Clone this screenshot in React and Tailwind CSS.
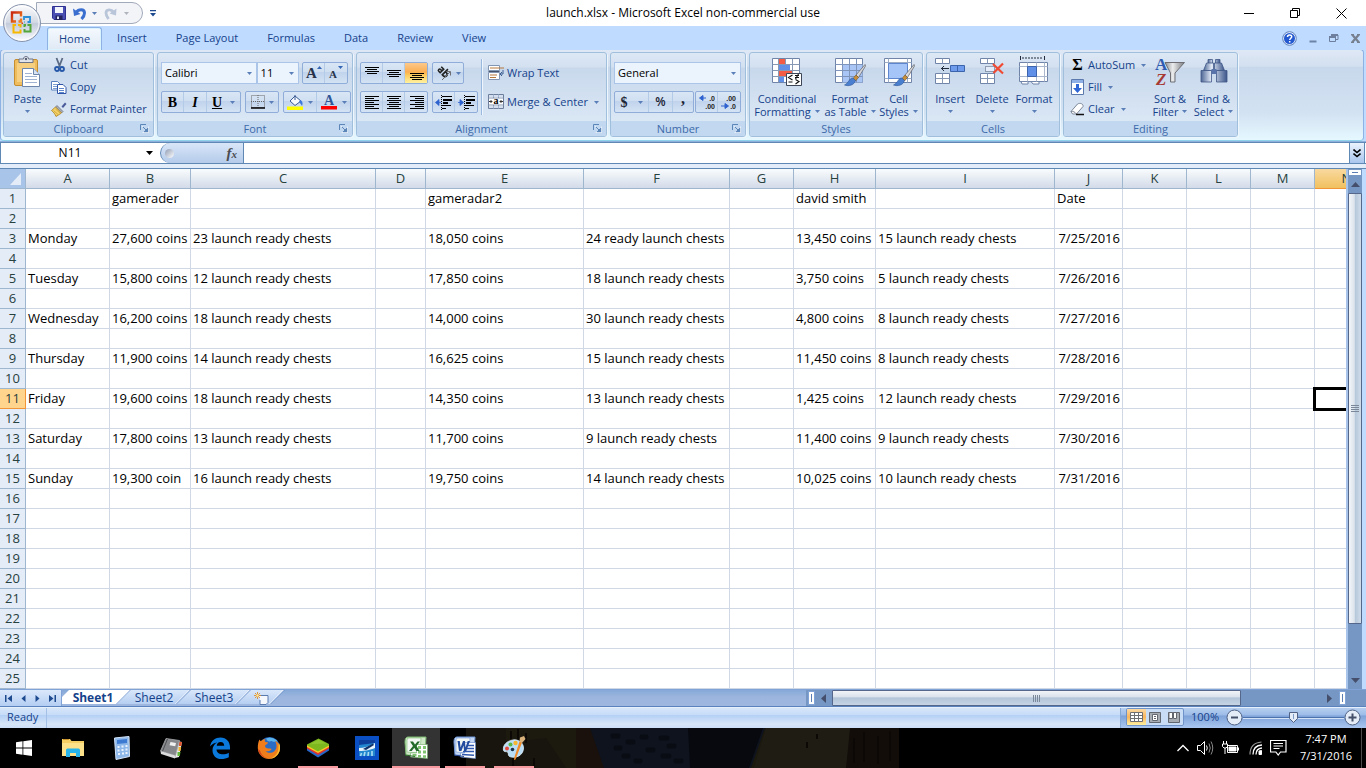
import { useState } from 'react'

const COLUMNS = [
  ['A', 84],
  ['B', 81],
  ['C', 185],
  ['D', 50],
  ['E', 158],
  ['F', 146],
  ['G', 64],
  ['H', 82],
  ['I', 179],
  ['J', 68],
  ['K', 64],
  ['L', 64],
  ['M', 64],
  ['N', 64],
]

const CELLS = {
  1: { B: 'gamerader', E: 'gameradar2', H: 'david smith', J: 'Date' },
  3: { A: 'Monday', B: '27,600 coins', C: '23 launch ready chests', E: '18,050 coins', F: '24 ready launch chests', H: '13,450 coins', I: '15 launch ready chests', J: '7/25/2016' },
  5: { A: 'Tuesday', B: '15,800 coins', C: '12 launch ready chests', E: '17,850 coins', F: '18 launch ready chests', H: '3,750 coins', I: '5 launch ready chests', J: '7/26/2016' },
  7: { A: 'Wednesday', B: '16,200 coins', C: '18 launch ready chests', E: '14,000 coins', F: '30 launch ready chests', H: '4,800 coins', I: '8 launch ready chests', J: '7/27/2016' },
  9: { A: 'Thursday', B: '11,900 coins', C: '14 launch ready chests', E: '16,625 coins', F: '15 launch ready chests', H: '11,450 coins', I: '8 launch ready chests', J: '7/28/2016' },
  11: { A: 'Friday', B: '19,600 coins', C: '18 launch ready chests', E: '14,350 coins', F: '13 launch ready chests', H: '1,425 coins', I: '12 launch ready chests', J: '7/29/2016' },
  13: { A: 'Saturday', B: '17,800 coins', C: '13 launch ready chests', E: '11,700 coins', F: '9 launch ready chests', H: '11,400 coins', I: '9 launch ready chests', J: '7/30/2016' },
  15: { A: 'Sunday', B: '19,300 coin', C: '16 launch ready chests', E: '19,750 coins', F: '14 launch ready chests', H: '10,025 coins', I: '10 launch ready chests', J: '7/31/2016' },
}

const ROWS = Array.from({ length: 25 }, (_, i) => i + 1)
const TABS = ['Home', 'Insert', 'Page Layout', 'Formulas', 'Data', 'Review', 'View']

/* ---------- small shared pieces ---------- */

function Caret({ className = 'text-[#5a7fb8]' }) {
  return (
    <svg width="5" height="3" viewBox="0 0 5 3" className={`shrink-0 ${className}`} aria-hidden="true">
      <path d="M0 0h5L2.5 3z" fill="currentColor" />
    </svg>
  )
}

function Group({ title, width, launcher, children }) {
  return (
    <section
      className={`flex h-[85px] shrink-0 flex-col overflow-hidden rounded-[3px] border border-[#9fbfdc] bg-[linear-gradient(#dde8f5,#d3e0f0_17%,#c8d8ec_18%,#dfebf7)] shadow-[1px_1px_0_#eef6fd] ${width}`}
    >
      <div className="flex h-[68px] items-start">{children}</div>
      <div className="relative flex h-[15px] items-center justify-center bg-[#c1d8f0] text-[11px] leading-[15px] text-[#3e6aaa]">
        {title}
        {launcher && (
          <button aria-label={`${title} options`} className="absolute right-1 top-[3px]">
            <svg width="9" height="9" viewBox="0 0 9 9">
              <path d="M.5 6V.5H6" fill="none" stroke="#5d86b8" />
              <path d="M3 3l4 4M8 4v4H4z" fill="#5d86b8" stroke="#5d86b8" />
              <path d="M2 2.500h1M2.500 8.500h6v-6" stroke="#fff" strokeWidth=".6" fill="none" />
            </svg>
          </button>
        )}
      </div>
    </section>
  )
}

// Row of joined buttons with a shared outline
function Strip({ children, className = '' }) {
  return (
    <div
      className={`flex h-[22px] divide-x divide-[#b4cbe8] rounded-[2px] border border-[#8fadd8] bg-[linear-gradient(#d9e6f5,#cfdff1_45%,#c0d3ec_46%,#d4e3f4)] ${className}`}
    >
      {children}
    </div>
  )
}

function StripButton({ label, className = 'w-[22px]', children }) {
  return (
    <button aria-label={label} className={`flex items-center justify-center gap-1 ${className}`}>
      {children}
    </button>
  )
}

function SmallButton({ icon, children, caret }) {
  return (
    <button className="flex h-[22px] items-center gap-[3px] whitespace-nowrap text-[11px] text-[#15428b]">
      {icon}
      {children}
      {caret && <span className="pl-[3px]"><Caret /></span>}
    </button>
  )
}

function BigButton({ icon, top, bottom, width }) {
  return (
    <button className={`flex flex-col items-center pt-[3px] text-[11px] leading-[13px] text-[#15428b] ${width}`}>
      {icon}
      <span className="mt-1 whitespace-nowrap">{top}</span>
      <span className="flex h-[13px] items-center gap-1 whitespace-nowrap">
        {bottom}
        <Caret />
      </span>
    </button>
  )
}

function Picker({ label, value, width }) {
  return (
    <div className={`relative h-[22px] ${width}`}>
      <select
        aria-label={label}
        className="block h-[22px] w-full appearance-none border border-[#abc5e8] bg-[#ebf3fc] pl-[3px] text-[11px] leading-4 text-black outline-none"
      >
        <option>{value}</option>
      </select>
      <span className="pointer-events-none absolute inset-y-0 right-[5px] flex items-center">
        <Caret />
      </span>
    </div>
  )
}

/* ---------- title bar ---------- */

function OfficeOrb() {
  return (
    <button aria-label="Office Button" className="absolute left-[2px] top-[3px] z-20">
      <svg width="40" height="40" viewBox="0 0 40 40">
        <defs>
          <linearGradient id="orb" x1="0" y1="0" x2="0" y2="1">
            <stop offset="0" stopColor="#fdfdfe" />
            <stop offset=".48" stopColor="#d3d9e4" />
            <stop offset=".52" stopColor="#c3cbdb" />
            <stop offset="1" stopColor="#fbfcff" />
          </linearGradient>
          <linearGradient id="orbRed" x1="0" y1="0" x2="1" y2="1">
            <stop offset="0" stopColor="#c8260e" />
            <stop offset="1" stopColor="#f58220" />
          </linearGradient>
        </defs>
        <circle cx="20" cy="20" r="18.5" fill="url(#orb)" stroke="#8794ad" />
        <circle cx="20" cy="20" r="17" fill="none" stroke="#fff" strokeOpacity=".8" />
        <path d="M19 13.500V9.500h-9v9h4M19 15.500v3h-2.500" fill="none" stroke="url(#orbRed)" strokeWidth="2.400" />
        <path d="M22 17V14h6v5h-2.500M22.500 19H22" fill="none" stroke="#2b8fd8" strokeWidth="1.800" />
        <path d="M14 22h-2.500v7.500h7v-3M18.500 24.500V22H16" fill="none" stroke="#f6b800" strokeWidth="2" />
        <path d="M25.500 22H28.500v6.500h-6v-2.500M22.500 24v-2h1.500" fill="none" stroke="#55a63a" strokeWidth="2" />
        <path d="M19.500 19.500h1.500v1.500h-1.500z" fill="#d8431a" />
      </svg>
    </button>
  )
}

function TitleBar() {
  return (
    <header className="grid h-[26px] grid-cols-[1fr_auto_1fr] items-center bg-white">
      <div className="flex items-center">
        <div className="ml-9 flex h-[22px] w-[107px] items-center gap-[7px] rounded-r-full border border-[#a1aaba] bg-[#f3f4f8] pl-[15px]">
          <button aria-label="Save">
            <svg width="14" height="14" viewBox="0 0 14 14">
              <path d="M.5.5h13v13H2L.5 12z" fill="#4a4fb4" stroke="#2e3192" />
              <path d="M3 1h8v6H3z" fill="#f2f4fb" />
              <path d="M3.500 9.500h7V14h-7z" fill="#23245e" />
              <path d="M5 10.500h2V13H5z" fill="#dfe3f5" />
            </svg>
          </button>
          <button aria-label="Undo" className="flex items-center gap-[5px]">
            <svg width="14" height="13" viewBox="0 0 14 13">
              <path d="M3 5.500C5.500 2 11.500 1.500 11.500 6c0 2.500-1.500 4.500-3 6" fill="none" stroke="#3a6fd0" strokeWidth="3" />
              <path d="M0 1.500l1 7.500 6.500-2z" fill="#3a6fd0" />
            </svg>
            <Caret />
          </button>
          <button aria-label="Redo" className="flex items-center gap-[7px]">
            <svg width="13" height="13" viewBox="0 0 13 13">
              <path d="M9.500 5C7.500 2 2 2 2 6c0 2.500 1 4 2.500 6" fill="none" stroke="#b9c5d9" strokeWidth="2.800" />
              <path d="M12.500 1.500L12 8.500 5.500 6.500z" fill="#b9c5d9" />
            </svg>
            <Caret className="text-[#b0b4bd]" />
          </button>
        </div>
        <button aria-label="Customize Quick Access Toolbar" className="ml-[7px]">
          <svg width="6" height="7" viewBox="0 0 6 7" fill="#1d4a8f">
            <path d="M0 0h6v1.200H0zM0 3h6L3 6.500z" />
          </svg>
        </button>
      </div>
      <h1 className="text-[12px] text-black">launch.xlsx - Microsoft Excel non-commercial use</h1>
      <div className="flex justify-end pr-0.5">
        <button aria-label="Minimize" className="flex w-[46px] items-center justify-center">
          <svg width="10" height="11" viewBox="0 0 10 11"><path d="M0 5.500h10" stroke="#000" /></svg>
        </button>
        <button aria-label="Restore" className="flex w-[46px] items-center justify-center">
          <svg width="10" height="10" viewBox="0 0 10 10">
            <path d="M.5 2.500h7v7h-7zM2.500 2.500v-2h7v7h-2" fill="none" stroke="#000" />
          </svg>
        </button>
        <button aria-label="Close" className="flex w-[46px] items-center justify-center">
          <svg width="11" height="11" viewBox="0 0 11 11"><path d="M.5.5l10 10M10.500.5l-10 10" stroke="#000" /></svg>
        </button>
      </div>
    </header>
  )
}

function TabStrip() {
  return (
    <nav className="relative z-10 flex h-6 items-end justify-between bg-[#bfdbff] pl-[47px]">
      <div className="flex gap-px text-[11px] text-[#15428b]">
        {TABS.map((tab) => (
          <button
            key={tab}
            className={
              tab === 'Home'
                ? 'h-[23px] rounded-t-[3px] border border-b-0 border-[#8db2e3] bg-[linear-gradient(#f5f9fe,#dfe9f5)] px-[11px] shadow-[inset_0_0_0_1px_#d9f3ff]'
                : 'h-[23px] px-3.5'
            }
          >
            {tab}
          </button>
        ))}
      </div>
      <div className="flex h-6 items-center gap-3 pr-1.5">
        <button aria-label="Help">
          <svg width="15" height="15" viewBox="0 0 15 15">
            <circle cx="7.500" cy="7.500" r="6.800" fill="#e9f1fd" stroke="#5f80bb" />
            <circle cx="7.500" cy="7.500" r="5.500" fill="#2459cf" />
            <path d="M5.500 6c0-2.600 4.200-2.600 4.200-.2 0 1.400-2 1.500-2 3.200M7.700 10v1.500" fill="none" stroke="#fff" strokeWidth="1.500" />
          </svg>
        </button>
        <button aria-label="Minimize workbook">
          <svg width="8" height="9" viewBox="0 0 8 9"><path d="M.5 6.500h7v2h-7z" fill="#6d84a6" /></svg>
        </button>
        <button aria-label="Restore workbook">
          <svg width="10" height="9" viewBox="0 0 10 9">
            <path d="M.5 3.500h6v4h-6zM2.500 3V1h6.500v4.500H7" fill="none" stroke="#6d7f9c" />
            <path d="M0 3h7M2 1h7" stroke="#6d7f9c" strokeWidth="2" />
          </svg>
        </button>
        <button aria-label="Close workbook">
          <svg width="9" height="9" viewBox="0 0 9 9">
            <path d="M1 .5l7 8M8 .5l-7 8" stroke="#77808f" strokeWidth="2.200" />
            <path d="M0 .5h3M6 .5h3M0 8.500h3M6 8.500h3" stroke="#77808f" />
          </svg>
        </button>
      </div>
    </nav>
  )
}

/* ---------- ribbon icons ---------- */

const PasteIcon = (
  <svg width="30" height="32" viewBox="0 0 30 32">
    <rect x="1.500" y="3.500" width="23" height="26" rx="1.500" fill="#f0bd5e" stroke="#c68d31" />
    <path d="M4 7h18v19H4z" fill="#f7cf80" />
    <path d="M6 6.500V3h4.500c0-3.500 5-3.500 5 0H20v3.500z" fill="#e2e4ea" stroke="#6c7488" />
    <circle cx="13" cy="3" r="1.200" fill="#555e74" />
    <path d="M9.500 12.500h11l6 6v12h-17z" fill="#fff" stroke="#6d85ab" />
    <path d="M20.500 12.500v6h6" fill="#d7e3f3" stroke="#6d85ab" />
    <path d="M12 17.500h7M12 20.500h12M12 23.500h12M12 26.500h12" stroke="#9fb2d2" />
  </svg>
)

const CutIcon = (
  <svg width="16" height="16" viewBox="0 0 16 16" fill="none">
    <path d="M5.500 1l3.500 9M11.500 1L8 10" stroke="#5b6b84" strokeWidth="1.800" />
    <circle cx="6" cy="12" r="2" stroke="#2858a8" strokeWidth="1.800" />
    <circle cx="11" cy="12" r="2" stroke="#2858a8" strokeWidth="1.800" />
  </svg>
)

const CopyIcon = (
  <svg width="16" height="16" viewBox="0 0 16 16" fill="#fff" stroke="#5a80bf">
    <path d="M.5 2.500h6l2.500 2.500v6h-8.500z" />
    <path d="M2 5.500h4M2 7.500h4M2 9.500h4" stroke="#7c9dd2" />
    <path d="M6.500 5.500h5.500l3 3v6h-8.500z" stroke="#2d54a6" />
    <path d="M8 9.500h5M8 11.500h5M8 13.500h5" stroke="#5e86cc" />
  </svg>
)

const PainterIcon = (
  <svg width="16" height="16" viewBox="0 0 16 16">
    <path d="M10.500 5.500L14 1.500l1.500 1.500L12 7z" fill="#4b5a9a" />
    <path d="M6 4.500l6 6-1.500 1.500-6-6z" fill="#a8aeb8" stroke="#646b7a" strokeWidth=".7" />
    <path d="M4.500 6L.5 9.500c2 1.500 3.500 3.500 4.500 6L10.500 12z" fill="#f3d36a" stroke="#ac7f1c" strokeWidth=".8" />
    <path d="M2.500 9.500L7 13.500M4.500 8l4.500 4" stroke="#c99a2b" strokeWidth=".7" />
  </svg>
)

function LinesIcon({ rows, top = 1 }) {
  return (
    <svg width="15" height="15" viewBox="0 0 15 15">
      {rows.map(([x, w], i) => (
        <rect key={i} x={x} y={top + i * 2} width={w} height="1" fill="#000" />
      ))}
    </svg>
  )
}

function IndentIcon({ flip }) {
  return (
    <svg width="17" height="15" viewBox="0 0 17 15">
      <path d="M7 1.500h10M8 4.500h8M8 7.500h5M7 10.500h9M7 13.500h4" stroke="#000" strokeWidth="1" />
      <path d="M8 4h9v2H8zM8 7h5v2H8z" fill="#000" />
      <path d="M6.500 0v15" stroke="#000" strokeDasharray="1 1" />
      <path d={flip ? 'M0 7.500h3M2 4.500L5.500 7.500 2 10.500z' : 'M2 7.500h4M4 4.500L.5 7.500 4 10.500z'} stroke="#2f63cf" fill="#2f63cf" strokeWidth=".8" />
    </svg>
  )
}

const OrientIcon = (
  <svg width="16" height="16" viewBox="0 0 16 16" fill="none">
    <g transform="rotate(45 7 7)" stroke="#222" strokeWidth="1.600">
      <path d="M2 4.500h3.500v5H3.500a1.300 1.300 0 010-2.600h2" />
      <path d="M8.500 1.500v8h1.500a2.200 2.200 0 000-4.400H8.500" />
    </g>
    <path d="M6 15l8-8M14.500 6.500v4M14.500 6.500h-4" stroke="#6d6d72" />
  </svg>
)

const WrapIcon = (
  <svg width="16" height="16" viewBox="0 0 16 16">
    <path d="M.5.500h11v5H.5zM.5 7.500h11v7H.5z" fill="#fff" stroke="#8296b4" />
    <path d="M2 3h14M2 10h7M2 12.500h6" stroke="#b5793d" strokeWidth="1.200" />
    <path d="M15 5v4h-2M14 7l-2 2 2 2" fill="none" stroke="#3d5c92" />
    <path d="M.5 6.500h11" stroke="#44526b" />
  </svg>
)

const MergeIcon = (
  <svg width="16" height="16" viewBox="0 0 16 16">
    <path d="M.5.500h15v14H.5z" fill="#fff" stroke="#6d7f9c" />
    <path d="M.5 4h15M.5 11h15M5.500 0v4M10.500 0v4M5.500 11v4M10.500 11v4" stroke="#8496b2" />
    <path d="M1 12h14v2H1zM1 1h14v2H1z" fill="#b8cbe6" fillOpacity=".6" />
    <text x="8" y="10" textAnchor="middle" fontSize="10" fontWeight="700" fontFamily="Liberation Serif, serif">a</text>
    <path d="M1 7.500h3M2.500 6L4 7.500 2.500 9M15 7.500h-3M13.500 6L12 7.500 13.500 9" stroke="#222" fill="none" strokeWidth=".9" />
  </svg>
)

function GridIcon({ children }) {
  return (
    <svg width="32" height="32" viewBox="0 0 32 32">
      <path d="M1.500 2.500h27v24h-27z" fill="#fff" stroke="#6f84a8" />
      {children}
    </svg>
  )
}

function Brush() {
  return (
    <g>
      <path d="M31 8.500L22 19l2.500 2.500L31.500 10z" fill="#d5d7da" stroke="#5c5f66" strokeWidth=".7" />
      <path d="M22 19l-3 3.500 2.500 2.500 3-3.500z" fill="#c9903c" stroke="#7d5619" strokeWidth=".6" />
      <path d="M19 22c-4 0-4 5-8.500 7 4 1.500 9.500.5 11-4.500z" fill="#4a7fd0" stroke="#2d5597" strokeWidth=".6" />
    </g>
  )
}

const ConditionalIcon = (
  <GridIcon>
    <path d="M8 3h6v6H8zM8 15h13v5H8z" fill="#f25c45" />
    <path d="M8 9h11v6H8zM8 20h5v6H8z" fill="#5f8fe6" />
    <path d="M1.500 8.500h27M1.500 14.500h27M1.500 20.500h27M7.500 2.500v24M14.500 2.500v6M21.500 2.500v24" stroke="#8798b5" />
    <path d="M15.500 17.500h15v12h-15z" fill="#fff" stroke="#3d4656" />
    <path d="M21.500 19l-4 2.500 4 2.500M17.500 26h4M24 19.500h4M24 21.500h4M27.500 18l-3 5M24.500 23.500l3.500 2-3.500 2.500" fill="none" stroke="#111" strokeWidth="1.100" />
  </GridIcon>
)

const TableIcon = (
  <GridIcon>
    <path d="M8 9h20.500v17.500H8z" fill="#a8c5f6" />
    <path d="M1.500 8.500h27M1.500 14.500h27M1.500 20.500h27M8.500 2.500v24M15.500 2.500v24M22.500 2.500v24" stroke="#7f94ba" />
    <Brush />
  </GridIcon>
)

const CellStyleIcon = (
  <GridIcon>
    <path d="M1.500 6.500h27M1.500 22.500h27M5.500 2.500v24M24.500 2.500v24" stroke="#9dacc5" />
    <path d="M5.500 7.500h19v15h-19z" fill="#a5c4f8" stroke="#5d86cf" />
    <Brush />
  </GridIcon>
)

const InsertIcon = (
  <svg width="32" height="32" viewBox="0 0 32 32">
    <path d="M1.500 2.500h14v5h-14zM1.500 17.500h14v10h-14z" fill="#fff" stroke="#6f84a8" />
    <path d="M8.500 2.500v5M8.500 17.500v10M1.500 22.500h14" stroke="#8798b5" />
    <path d="M16.500 9.500h14v6h-14z" fill="#6f9bec" stroke="#3c64ad" />
    <path d="M23.500 9.500v6" stroke="#3c64ad" />
    <path d="M15 12.500H7M10 10l-2.500 2.500L10 15" stroke="#222b3b" fill="none" />
  </svg>
)

const DeleteIcon = (
  <svg width="32" height="32" viewBox="0 0 32 32">
    <path d="M4.500 2.500h14v5h-14zM4.500 17.500h14v10h-14z" fill="#fff" stroke="#6f84a8" />
    <path d="M11.500 2.500v5M11.500 17.500v10M4.500 22.500h14" stroke="#8798b5" />
    <path d="M9.500 10.500h9v5h-9z" fill="#e4edf9" stroke="#44536e" strokeDasharray="1 1" />
    <path d="M17 8l10 9.500M27 7.500L17.500 17" stroke="#f04a32" strokeWidth="2.200" />
  </svg>
)

const FormatIcon = (
  <svg width="32" height="32" viewBox="0 0 32 32">
    <path d="M2.500 0v4M26.500 0v4" stroke="#222b3b" />
    <path d="M4 2h21" stroke="#222b3b" strokeDasharray="2 1" />
    <path d="M1.500 6.500h28v19h-28z" fill="#fff" stroke="#6f84a8" />
    <path d="M3 25.500h7v2.500H4zM13 25.500h8v2.500h-6z" fill="#fff" stroke="#6f84a8" />
    <path d="M1.500 10.500h28M1.500 20.500h28M9.500 6.500v19M18.500 6.500v19M26.500 6.500v19" stroke="#aab7cc" />
    <path d="M9.500 10.500h9v10h-9z" fill="#5f8fe6" stroke="#3c64ad" />
  </svg>
)

const FillIcon = (
  <svg width="15" height="16" viewBox="0 0 15 16">
    <path d="M1.500.500h12v15h-12z" fill="#fff" stroke="#5b79ad" />
    <path d="M2 1h11v3H2z" fill="#8fb0e6" />
    <path d="M6 5h3v4h3l-4.500 5L3 9h3z" fill="#2f66d6" />
  </svg>
)

const EraserIcon = (
  <svg width="15" height="16" viewBox="0 0 15 16">
    <path d="M1 10.500L7.500 3c3-1.500 6 0 5.500 2.500L6.500 13H2.500z" fill="#fff" stroke="#7d8798" />
    <path d="M1 10.500c2-.5 4 .5 5.500 2.500" fill="none" stroke="#7d8798" />
    <path d="M6 13.500h8" stroke="#111" strokeWidth="1.300" />
  </svg>
)

const SortIcon = (
  <svg width="32" height="32" viewBox="0 0 32 32">
    <defs>
      <linearGradient id="funnel">
        <stop offset="0" stopColor="#8b8d92" />
        <stop offset=".4" stopColor="#eceded" />
        <stop offset="1" stopColor="#77797e" />
      </linearGradient>
    </defs>
    <text x="1" y="14" fontSize="17" fontWeight="700" fontFamily="Liberation Serif, serif" fill="#2f5bb0">A</text>
    <text x="2" y="29" fontSize="17" fontWeight="700" fontStyle="italic" fontFamily="Liberation Serif, serif" fill="#a63a34">Z</text>
    <path d="M11 6.500h19.500L21 17v9h-4.500v-9z" fill="url(#funnel)" stroke="#6d6f75" />
  </svg>
)

const FindIcon = (
  <svg width="30" height="32" viewBox="0 0 30 32">
    <defs>
      <linearGradient id="barrel">
        <stop offset="0" stopColor="#4e6795" />
        <stop offset=".4" stopColor="#e4ecf8" />
        <stop offset="1" stopColor="#3c568a" />
      </linearGradient>
    </defs>
    <g fill="url(#barrel)" stroke="#3f5787" strokeWidth=".8">
      <path d="M9 3.500h4.500v4H9zM16.500 3.500H21v4h-4.500z" />
      <path d="M7.500 7h7v7.500h-10zM15.500 7h7l3 7.500H15.500z" />
      <path d="M2 14.500h10.500V26H2zM17.500 14.500H28V26H17.500z" />
    </g>
    <path d="M12.500 13h5v5h-5z" fill="#5874aa" />
  </svg>
)

/* ---------- ribbon ---------- */

function Ribbon() {
  return (
    <div className="mr-0.5 rounded-[4px] border border-[#8db2e3] border-b-[#8fd3ea] bg-[linear-gradient(#dfe8f5,#d3e0f0_18%,#c8d8ec_19%,#d3e2f2_70%,#e5f8ff)]">
      <div className="flex gap-[3px] overflow-hidden px-0.5 pb-[3px] pt-0.5">
        <Group title="Clipboard" width="w-[151px]" launcher>
          <button className="flex w-[47px] flex-col items-center pt-[3px] text-[11px] leading-[13px] text-[#15428b]">
            {PasteIcon}
            <span className="mt-1">Paste</span>
            <span className="flex h-[13px] items-center"><Caret /></span>
          </button>
          <div className="flex flex-col pt-px">
            <SmallButton icon={CutIcon}>Cut</SmallButton>
            <SmallButton icon={CopyIcon}>Copy</SmallButton>
            <SmallButton icon={PainterIcon}>Format Painter</SmallButton>
          </div>
        </Group>

        <Group title="Font" width="w-[196px]" launcher>
          <div className="flex w-full flex-col gap-[7px] pl-[3px] pr-1 pt-[9px]">
            <div className="flex">
              <Picker label="Font" value="Calibri" width="w-[97px]" />
              <Picker label="Font size" value="11" width="w-[43px]" />
              <Strip className="ml-[3px]">
                <StripButton label="Grow font">
                  <svg width="18" height="18" viewBox="0 0 18 18">
                    <text x="1" y="14" fontSize="15" fontWeight="700" fontFamily="Liberation Serif, serif" fill="#26334a">A</text>
                    <path d="M12 5l2.500-3L17 5z" fill="#3565b5" />
                  </svg>
                </StripButton>
                <StripButton label="Shrink font">
                  <svg width="18" height="18" viewBox="0 0 18 18">
                    <text x="2" y="14" fontSize="11" fontWeight="700" fontFamily="Liberation Serif, serif" fill="#26334a">A</text>
                    <path d="M11 2l2.500 3L16 2z" fill="#3565b5" />
                  </svg>
                </StripButton>
              </Strip>
            </div>
            <div className="flex gap-1 font-['Liberation_Serif',serif] text-[14px] font-bold text-black">
              <Strip>
                <StripButton label="Bold">B</StripButton>
                <StripButton label="Italic" className="w-[23px]"><i>I</i></StripButton>
                <StripButton label="Underline" className="w-[33px]">
                  <u>U</u>
                  <span className="pl-1"><Caret /></span>
                </StripButton>
              </Strip>
              <Strip>
                <StripButton label="Borders" className="w-8">
                  <svg width="14" height="14" viewBox="0 0 14 14">
                    <path d="M.5.500h13v12H.5zM7 0v13M0 6.500h14" fill="none" stroke="#666" strokeDasharray="1 1" />
                    <path d="M0 13h14" stroke="#000" strokeWidth="1.500" />
                  </svg>
                  <Caret />
                </StripButton>
              </Strip>
              <Strip>
                <StripButton label="Fill color" className="w-[33px]">
                  <svg width="17" height="17" viewBox="0 0 17 17">
                    <path d="M8 2l6 5-6 4.500L3 7z" fill="#f5f8fd" stroke="#3b5b94" />
                    <path d="M8 1v5" stroke="#3b5b94" />
                    <path d="M13 6c3 1 3 4 2 6-1-2-2-3-3-4z" fill="#3d7adb" />
                    <path d="M0 12.500h16V16H0z" fill="#ff0" />
                  </svg>
                  <Caret />
                </StripButton>
                <StripButton label="Font color" className="w-[33px]">
                  <svg width="17" height="18" viewBox="0 0 17 18">
                    <text x="8" y="12" textAnchor="middle" fontSize="14" fontWeight="700" fontFamily="Liberation Serif, serif" fill="#2f5597">A</text>
                    <path d="M0 13h16v3.500H0z" fill="#f00" />
                  </svg>
                  <Caret />
                </StripButton>
              </Strip>
            </div>
          </div>
        </Group>

        <Group title="Alignment" width="w-[251px]" launcher>
          <div className="flex flex-col gap-[7px] pl-[3px] pt-[9px]">
            <div className="flex gap-1">
              <Strip>
                <StripButton label="Top align"><LinesIcon top={1} rows={[[1, 14], [3, 10], [1, 14], [3, 10]]} /></StripButton>
                <StripButton label="Middle align"><LinesIcon top={4} rows={[[1, 14], [3, 10], [1, 14], [3, 10]]} /></StripButton>
                <StripButton label="Bottom align" className="w-[22px] bg-[linear-gradient(#fcc98a,#fbae52_45%,#fdca5c_60%,#fff2a0)]">
                  <LinesIcon top={7} rows={[[1, 14], [3, 10], [1, 14], [3, 10]]} />
                </StripButton>
              </Strip>
              <Strip>
                <StripButton label="Orientation" className="w-[30px]">
                  {OrientIcon}
                  <Caret />
                </StripButton>
              </Strip>
            </div>
            <div className="flex gap-1">
              <Strip>
                <StripButton label="Align left"><LinesIcon rows={[[1, 14], [1, 9], [1, 14], [1, 9], [1, 14], [1, 9], [1, 14]]} /></StripButton>
                <StripButton label="Center"><LinesIcon rows={[[1, 14], [3, 10], [1, 14], [3, 10], [1, 14], [3, 10], [1, 14]]} /></StripButton>
                <StripButton label="Align right"><LinesIcon rows={[[1, 14], [6, 9], [1, 14], [6, 9], [1, 14], [6, 9], [1, 14]]} /></StripButton>
              </Strip>
              <Strip>
                <StripButton label="Decrease indent"><IndentIcon /></StripButton>
                <StripButton label="Increase indent"><IndentIcon flip /></StripButton>
              </Strip>
            </div>
          </div>
          <div className="ml-[3px] mr-[5px] mt-1.5 h-[56px] w-0.5 border-l border-[#9ab9df] bg-[#eef5fc]" />
          <div className="flex flex-col gap-[7px] pt-[9px]">
            <SmallButton icon={WrapIcon}>Wrap Text</SmallButton>
            <SmallButton icon={MergeIcon} caret>Merge &amp; Center</SmallButton>
          </div>
        </Group>

        <Group title="Number" width="w-[136px]" launcher>
          <div className="flex w-full flex-col gap-[7px] pl-[3px] pr-1 pt-[9px]">
            <Picker label="Number format" value="General" width="w-full" />
            <div className="flex justify-between font-['Liberation_Serif',serif] text-[14px] font-bold text-[#1d2536]">
              <Strip>
                <StripButton label="Accounting format" className="w-[34px]">
                  $<span className="pl-1.5"><Caret /></span>
                </StripButton>
                <StripButton label="Percent style" className="w-6 font-['Open_Sans',sans-serif] text-[12px] font-semibold">%</StripButton>
                <StripButton label="Comma style" className="w-5 pb-1.5 text-[16px] leading-none">,</StripButton>
              </Strip>
              <Strip>
                <StripButton label="Increase decimal">
                  <svg width="16" height="18" viewBox="0 0 16 18" fontFamily="Liberation Sans, sans-serif" fontSize="7" fontWeight="700" fill="#222" textAnchor="end">
                    <text x="16" y="8">.0</text>
                    <text x="16" y="16">.00</text>
                    <path d="M7 5H3M4 2.500L.5 5 4 7.500z" stroke="#2f63cf" fill="#2f63cf" />
                  </svg>
                </StripButton>
                <StripButton label="Decrease decimal">
                  <svg width="16" height="18" viewBox="0 0 16 18" fontFamily="Liberation Sans, sans-serif" fontSize="7" fontWeight="700" fill="#222" textAnchor="end">
                    <text x="15" y="8">.00</text>
                    <text x="15" y="16">.0</text>
                    <path d="M0 13h4M4 10.500L7.500 13 4 15.500z" stroke="#2f63cf" fill="#2f63cf" />
                  </svg>
                </StripButton>
              </Strip>
            </div>
          </div>
        </Group>

        <Group title="Styles" width="w-[174px]">
          <BigButton width="w-[74px]" icon={ConditionalIcon} top="Conditional" bottom="Formatting" />
          <BigButton width="w-[52px]" icon={TableIcon} top="Format" bottom="as Table" />
          <BigButton width="w-[45px]" icon={CellStyleIcon} top="Cell" bottom="Styles" />
        </Group>

        <Group title="Cells" width="w-[134px]">
          <BigButton width="w-[46px]" icon={InsertIcon} top="Insert" />
          <BigButton width="w-[38px]" icon={DeleteIcon} top="Delete" />
          <BigButton width="w-[46px]" icon={FormatIcon} top="Format" />
        </Group>

        <Group title="Editing" width="w-[175px]">
          <div className="flex w-[84px] flex-col pl-1.5 pt-px">
            <SmallButton
              caret
              icon={<span className="w-[15px] text-center font-['Liberation_Serif',serif] text-[16px] font-bold text-black">Σ</span>}
            >
              AutoSum
            </SmallButton>
            <SmallButton icon={FillIcon} caret>Fill</SmallButton>
            <SmallButton icon={EraserIcon} caret>Clear</SmallButton>
          </div>
          <BigButton width="w-[44px]" icon={SortIcon} top="Sort &amp;" bottom="Filter" />
          <BigButton width="w-[43px]" icon={FindIcon} top="Find &amp;" bottom="Select" />
        </Group>
      </div>
    </div>
  )
}

/* ---------- formula bar and grid ---------- */

function FormulaBar() {
  return (
    <div className="flex h-[22px] border-y border-[#6088b5] bg-white">
      <div className="flex w-[160px] shrink-0 items-center border-l border-[#6088b5]">
        <input aria-label="Name box" defaultValue="N11" className="w-[138px] bg-transparent text-center text-[12px] text-black outline-none" />
        <button aria-label="Names" className="ml-[7px]">
          <svg width="7" height="4" viewBox="0 0 7 4"><path d="M0 0h7L3.500 4z" /></svg>
        </button>
      </div>
      <div className="flex w-[84px] shrink-0 items-center justify-between rounded-l-full border-l border-r border-[#6088b5] bg-[linear-gradient(#d9e6f8,#b4cbea)] pl-1 pr-1.5">
        <span className="h-[9px] w-[9px] rounded-full bg-[linear-gradient(135deg,#8f9cb3,#fff)]" />
        <button className="font-['Liberation_Serif',serif] text-[15px] font-bold italic leading-none text-[#4c4c50]">
          f<span className="text-[11px]">x</span>
        </button>
      </div>
      <input aria-label="Formula" className="min-w-0 flex-1 px-1 text-[12px] outline-none" />
      <button aria-label="Expand formula bar" className="mr-px flex w-4 items-center justify-center border-x border-[#6088b5] bg-[linear-gradient(#eaf2fc,#a9c6ee)]">
        <svg width="8" height="9" viewBox="0 0 8 9"><path d="M.5.500L4 3.500 7.500.500M.5 4.500L4 7.500l3.500-3" fill="none" stroke="#000" strokeWidth="1.600" /></svg>
      </button>
    </div>
  )
}

function Sheet() {
  return (
    <div className="min-w-0 flex-1 overflow-hidden bg-white">
      <table className="w-[1379px] table-fixed border-separate border-spacing-0 text-[13px] leading-[19px] text-black">
        <colgroup>
          <col className="w-[26px]" />
          {COLUMNS.map(([name, width]) => (
            <col key={name} style={{ width }} />
          ))}
        </colgroup>
        <thead>
          <tr>
            <th aria-label="Select all" className="h-5 border-b border-r border-[#9eb6ce] bg-[#a9c4e9] p-0">
              <svg width="25" height="19" viewBox="0 0 25 19" className="block"><path d="M21 4v12H10z" fill="#e4ecf7" /></svg>
            </th>
            {COLUMNS.map(([name]) => (
              <th
                key={name}
                scope="col"
                className={
                  name === 'N'
                    ? 'h-5 border-b border-r border-[#f29536] bg-[linear-gradient(#f9d99f,#f1c15f)] p-0 text-center font-normal text-[#27413e]'
                    : 'h-5 border-b border-r border-[#9eb6ce] bg-[linear-gradient(#f9fcfd,#d3dbe9)] p-0 text-center font-normal text-[#27413e]'
                }
              >
                {name}
              </th>
            ))}
          </tr>
        </thead>
        <tbody>
          {ROWS.map((row) => (
            <tr key={row}>
              <th
                scope="row"
                className={
                  row === 11
                    ? 'h-5 border-b border-r border-[#f29536] bg-[#ffd58d] p-0 text-center font-normal text-[#27413e]'
                    : 'h-5 border-b border-r border-[#9eb6ce] bg-[#e4ecf7] p-0 text-center font-normal text-[#27413e]'
                }
              >
                {row}
              </th>
              {COLUMNS.map(([name]) => (
                <td
                  key={name}
                  className={`h-5 whitespace-nowrap border-b border-r border-[#d0d7e5] p-0 ${name === 'J' && row > 1 ? 'pr-0.5 text-right' : 'pl-0.5'} ${
                    name === 'N' && row === 11 ? 'outline-3 -outline-offset-1 outline-black' : ''
                  }`}
                >
                  {CELLS[row]?.[name]}
                </td>
              ))}
            </tr>
          ))}
        </tbody>
      </table>
    </div>
  )
}

function VerticalScroll() {
  return (
    <div className="flex w-4 shrink-0 flex-col items-center border-l-2 border-[#a9c4ea] bg-[#7697c3]">
      <div className="flex h-[7px] w-full items-center border border-[#7697c3] bg-white px-[3px]">
        <span className="h-px w-full bg-[#5b7fb5]" />
      </div>
      <button aria-label="Scroll up" className="flex h-[17px] items-center">
        <svg width="9" height="5" viewBox="0 0 9 5"><path d="M0 5h9L4.500 0z" fill="#454f6b" /></svg>
      </button>
      <div className="w-full flex-1">
        <div className="flex h-[90%] w-full items-center justify-center rounded-[1px] border border-[#55678b] bg-[linear-gradient(90deg,#f3f6f9,#dbe3ec_45%,#b5c7da_50%,#cfdcea)]">
          <svg width="8" height="7" viewBox="0 0 8 7"><path d="M0 .5h8M0 2.500h8M0 4.500h8M0 6.500h8" stroke="#7b8899" /></svg>
        </div>
      </div>
      <button aria-label="Scroll down" className="flex h-[17px] items-center">
        <svg width="9" height="5" viewBox="0 0 9 5"><path d="M0 0h9L4.500 5z" fill="#454f6b" /></svg>
      </button>
    </div>
  )
}

const NAV_PATHS = [
  ['First sheet', 'M0 0h1.500v7H0zM7 0v7L2.500 3.500z'],
  ['Previous sheet', 'M5.500 0v7L1.500 3.500z'],
  ['Next sheet', 'M1.500 0v7l4-3.500z'],
  ['Last sheet', 'M0 0v7l4.500-3.500zM5.500 0H7v7H5.500z'],
]

function SheetTab({ active, width, label, children }) {
  return (
    <button aria-label={label} className={`relative flex h-full items-center justify-center ${width}`}>
      <span
        className={`absolute inset-x-0 bottom-[2px] top-0 origin-center -skew-x-45 border-r border-[#6f94cb] shadow-[inset_-1px_0_0_#fff] ${
          active ? 'bg-white' : 'bg-[linear-gradient(#d9e7fa,#b6cff2)]'
        }`}
      />
      <span className="relative text-[12px] leading-4">{children}</span>
    </button>
  )
}

function SheetBar() {
  return (
    <div className="grid h-[18px] grid-cols-[59fr_41fr] border-t border-[#7fa3d6] bg-[linear-gradient(#86a9d8,#9bb5de_40%,#9db7df)]">
      <div className="flex overflow-hidden border-b border-[#5a82bd] text-[#15428b]">
        <div className="relative z-10 flex w-[62px] shrink-0 items-center justify-between border-r border-[#7fa3d6] bg-[linear-gradient(#dbe8fb,#b4cef3)] px-[5px]">
          {NAV_PATHS.map(([label, d]) => (
            <button key={label} aria-label={label}>
              <svg width="7" height="7" viewBox="0 0 7 7"><path d={d} fill="#1d4a8f" /></svg>
            </button>
          ))}
        </div>
        <SheetTab active width="w-[62px]"><b>Sheet1</b></SheetTab>
        <SheetTab width="w-[60px]">Sheet2</SheetTab>
        <SheetTab width="w-[60px]">Sheet3</SheetTab>
        <SheetTab width="w-[34px]" label="Insert worksheet">
          <svg width="15" height="13" viewBox="0 0 15 13" className="block">
            <path d="M5 3.500h9v7l-2 2H6V8" fill="#f4f7fc" stroke="#5a7bb0" />
            <path d="M3.500 0v7M0 3.500h7M1 1l5 5M6 1L1 6" stroke="#e0902a" strokeWidth=".9" />
            <circle cx="3.500" cy="3.500" r="1.200" fill="#ffe9a0" />
          </svg>
        </SheetTab>
      </div>
      <div className="flex border-b border-[#5a82bd] bg-[#7697c3]">
        <span className="my-px ml-0.5 flex w-[7px] items-center justify-center border border-[#7fa3d6] bg-white">
          <span className="h-2 w-px bg-[#5b7fb5]" />
        </span>
        <button aria-label="Scroll left" className="flex w-[17px] items-center justify-center">
          <svg width="5" height="9" viewBox="0 0 5 9"><path d="M5 0v9L0 4.500z" fill="#454f6b" /></svg>
        </button>
        <div className="flex-1">
          <div className="flex h-full w-5/6 items-center justify-center rounded-[1px] border border-[#55678b] bg-[linear-gradient(#f1f4f8,#dbe3ec_40%,#b3c5d8_50%,#c6d5e6)]">
            <svg width="7" height="7" viewBox="0 0 7 7"><path d="M.5 0v7M2.500 0v7M4.500 0v7M6.500 0v7" stroke="#7b8899" /></svg>
          </div>
        </div>
        <button aria-label="Scroll right" className="flex w-3 items-center justify-center">
          <svg width="5" height="9" viewBox="0 0 5 9"><path d="M0 0v9l5-4.500z" fill="#454f6b" /></svg>
        </button>
        <span className="my-px ml-1 mr-5 flex w-[7px] items-center justify-center border border-[#7fa3d6] bg-white">
          <span className="h-2 w-px bg-[#5b7fb5]" />
        </span>
      </div>
    </div>
  )
}

function StatusBar() {
  const [zoom, setZoom] = useState(50)
  return (
    <footer className="flex h-[21px] items-stretch justify-between border-t border-[#e6f0fd] bg-[linear-gradient(#d7e6f9,#c7dcf8_34%,#b3d0f5_36%,#d7e5f7_80%,#cddff8)] text-[#15428b]">
      <div className="flex items-center border-r border-[#a4c0e6] pb-0.5 pl-[7px] pr-2 text-[11px]">Ready</div>
      <div className="flex items-center border-l border-[#86a8d6] bg-[linear-gradient(#b6cff0,#9dbce8_34%,#7fa3d9_40%,#a9c6ef)] pb-0.5 pl-[5px] pr-[5px]">
        <div className="flex h-[18px] overflow-hidden rounded-[2px] border border-[#6f93c8] bg-[#c9dcf5]">
          <button aria-label="Normal view" className="flex w-[19px] items-center justify-center bg-[linear-gradient(#fbd9a5,#f9b55c_50%,#fff0a0)]">
            <svg width="13" height="10" viewBox="0 0 13 10"><path d="M.5.500h12v9H.5zM.5 3.500h12M.5 6.500h12M4.500.500v9M8.500.500v9" fill="#fff" stroke="#6e6e72" /></svg>
          </button>
          <button aria-label="Page layout view" className="flex w-[18px] items-center justify-center">
            <svg width="12" height="11" viewBox="0 0 12 11">
              <path d="M.5.500h11v10H.5z" fill="#a7abb2" stroke="#62666e" />
              <path d="M3.500 2.500h5v6h-5z" fill="#fff" stroke="#62666e" />
              <path d="M5 4.500h2M5 6.500h2" stroke="#62666e" />
            </svg>
          </button>
          <button aria-label="Page break preview" className="flex w-[19px] items-center justify-center">
            <svg width="12" height="11" viewBox="0 0 12 11">
              <path d="M.5.500h11v10H.5z" fill="#a7abb2" stroke="#62666e" />
              <path d="M1 .5h3.500v6H1zM5.500.500h3v6h-3z" fill="#fff" stroke="#62666e" />
            </svg>
          </button>
        </div>
        <button className="w-[42px] text-center text-[11px]">100%</button>
        <button aria-label="Zoom out">
          <svg width="17" height="17" viewBox="0 0 17 17">
            <circle cx="8.500" cy="8.500" r="7.500" fill="#e4ecf7" stroke="#4f6285" />
            <path d="M5 8.500h7" stroke="#44506a" strokeWidth="2" />
          </svg>
        </button>
        <div className="relative flex h-full w-[101px] items-center">
          <svg width="101" height="15" viewBox="0 0 101 15">
            <path d="M0 7.500h101" stroke="#4c72ad" />
            <path d="M0 8.500h101" stroke="#d3e2f7" />
            <path d="M46.500 2.500h8v6l-4 4-4-4z" fill="#e4ecf7" stroke="#4f6285" />
            <path d="M50.500 4v5" stroke="#7f9cc8" />
          </svg>
          <input
            type="range"
            aria-label="Zoom"
            value={zoom}
            onChange={(e) => setZoom(Number(e.target.value))}
            className="absolute inset-0 w-full opacity-0"
          />
        </div>
        <button aria-label="Zoom in">
          <svg width="17" height="17" viewBox="0 0 17 17">
            <circle cx="8.500" cy="8.500" r="7.500" fill="#e4ecf7" stroke="#4f6285" />
            <path d="M4.500 8.500h8M8.500 4.500v8" stroke="#44506a" strokeWidth="2" />
          </svg>
        </button>
      </div>
    </footer>
  )
}

/* ---------- taskbar ---------- */

const WindowsIcon = (
  <svg width="16" height="16" viewBox="0 0 16 16" fill="#fff">
    <path d="M0 2.200L6.500 1.300v6.200H0zM7.300 1.200L16 0v7.500H7.300zM0 8.400h6.500v6.300L0 13.800zM7.300 8.400H16V16l-8.700-1.200z" />
  </svg>
)

const ExplorerIcon = (
  <svg width="22" height="20" viewBox="0 0 22 20">
    <path d="M0 1h8l1.500 2H22v15H0z" fill="#f5cf63" />
    <path d="M1 1.500h6" stroke="#c8932d" />
    <path d="M0 5h22v13H0z" fill="#fde08a" />
    <path d="M4 19v-7q0-1.500 1.500-1.500h11q1.500 0 1.500 1.500v7h-4v-4H8v4z" fill="#28b4ea" />
  </svg>
)

const CalculatorIcon = (
  <svg width="18" height="24" viewBox="0 0 18 24">
    <path d="M1.500 2L16 .5l.5 20L3 23.500z" fill="#8fb8ea" stroke="#d5e5f8" />
    <path d="M4 4l10-1v4L4 8z" fill="#3d7ad1" />
    <path d="M4.500 11h2M8.500 10.500h2M12.500 10h2M4.500 14.500h2M8.500 14h2M12.500 13.500h2M5 18h2M9 17.500h2M12.500 17h2" stroke="#eaf3fd" strokeWidth="2" />
  </svg>
)

const NotebookIcon = (
  <svg width="24" height="24" viewBox="0 0 24 24">
    <path d="M18 5l5 1-3 15-4 1z" fill="#e9e9e9" />
    <path d="M20 6h3l-.7 4H20z" fill="#e0532f" />
    <path d="M19.500 11h2.700l-.7 4h-2z" fill="#f2b32c" />
    <path d="M18.500 16h3l-.7 4h-2.300z" fill="#5eb53a" />
    <path d="M7 2.500L20.500 4.500 16.500 19.500 1.500 15z" fill="#85878b" stroke="#a5a7aa" strokeWidth=".8" />
    <path d="M1.500 15l15 4.500-.5 3L2 18z" fill="#dcdcdc" />
    <path d="M11.500 6l5.500.9-.8 3.400-5.700-1z" fill="#f1f1f1" />
    <path d="M8.500 3L3.500 15.200" stroke="#4e5053" />
  </svg>
)

const EdgeIcon = (
  <svg width="22" height="22" viewBox="0 0 22 22">
    <path
      d="M1 9.500C2 3.500 6.500.5 11.500.5c6 0 9.500 4.500 9.500 9.500v2.500H7.500c.2 3.500 3.300 4.800 6.300 4.800 2.300 0 4.200-.6 6-1.600v4.500c-2.300 1.200-4.800 1.800-7.300 1.800-5.500 0-9-3.500-9-8.800 0-3.300 1.700-6.200 4.700-7.700C5 6 3 7 1 9.500zM7.700 8.800h7.500c0-2.300-1.200-3.700-3.700-3.700-2.200 0-3.500 1.500-3.800 3.700z"
      fill="#0a79db"
    />
  </svg>
)

const FirefoxIcon = (
  <svg width="24" height="24" viewBox="0 0 24 24">
    <circle cx="12.500" cy="11.500" r="10.500" fill="#2b6cc4" />
    <path d="M9 2.500c5-2 10 .5 11.500 3-3-.5-4 1-6-.5-2 1-4.500.5-5.500-2.500z" fill="#5bb4ec" />
    <path d="M2.500 3.500c.5 1 1 1.500 1.500 1.500 1.500-1.500 3-1.800 4.500-1.800-.8 1-.8 2-.5 2.500 1 .5 2.500.3 3 .8 0 1.500-2.500 2-3 3.300 0 2 2 3 4 2.700 1.500-.3 2.500.2 2.500.7-1 2-4 2.300-6 1.800 3.500 3.500 10.500 2 11-4.500.2-2-.5-4.500-1.500-5.500 3.500 1 5.500 4.500 5 8.500C22 19 17.500 23 12 23S.8 18.500.8 12c0-3.500.5-6.500 1.700-8.500z" fill="#ef7d1c" />
    <path d="M22 7c1 2 1.200 4 .8 6.500-.8 5.500-5.500 9-10 9.300 4-1.500 7.500-4 8.500-9 .5-2.500 0-5 .7-6.800z" fill="#f9c22e" />
    <path d="M1 13c1 6 6 9.500 11 9.500-4-.5-8-3.500-9-8z" fill="#d3431b" />
  </svg>
)

const BlueStacksIcon = (
  <svg width="22" height="20" viewBox="0 0 22 20">
    <path d="M0 12.500L11 19.500l11-7v-3H0z" fill="#2767c8" />
    <path d="M0 10.500L11 17l11-6.500v-2.500H0z" fill="#e3342b" />
    <path d="M0 9L11 15l11-6V7H0z" fill="#ffc927" />
    <path d="M0 6.500L11.500.5 22 6v1.500L11 13.500 0 7.500z" fill="#7cb81e" />
    <path d="M3 6.200L11.500 1.500 19 5.500z" fill="#a0d03d" fillOpacity=".5" />
  </svg>
)

const SkyIcon = (
  <svg width="24" height="24" viewBox="0 0 24 24">
    <path d="M0 0h24v24H0z" fill="#0a4fc4" />
    <path d="M4 4h16v16H4z" fill="#2387cf" />
    <path d="M4 4h16v3L4 9z" fill="#0d3f9a" />
    <path d="M4 12c5 0 11-2 16-5v5c-5 2-9 3-16 3z" fill="#e8f4fc" />
    <path d="M8 13L18 7.500 19 9l-8 5z" fill="#0d2f68" />
    <path d="M5.500 20l1-3M9 20l1-4M13 20l.5-4M17 20v-5" stroke="#a7dcf2" strokeWidth="1.600" />
  </svg>
)

function OfficeFile({ dark, mid, light, children }) {
  return (
    <svg width="24" height="24" viewBox="0 0 24 24">
      <path d="M4 1h18L21 20 2 19 1 6q0-5 3-5z" fill={light} stroke={mid} />
      <path d="M3 4q0-2 2-2h12l-1 15-13-1z" fill="#f4f8f4" stroke={mid} strokeWidth=".6" />
      {children}
      <path d="M1 19l10 1.500" stroke={dark} />
    </svg>
  )
}

const ExcelIcon = (
  <OfficeFile dark="#2c6b2c" mid="#7bb86f" light="#cfe8c8">
    <path d="M12.500 8.500h11v14l-17-1.500v-4h6z" fill="#fff" stroke="#6aa95f" strokeWidth=".6" />
    <path d="M14 10h3v3h-3zM19 10h3v3h-3zM14 14.500h3v3h-3zM19 14.500h3v3h-3zM14 19h3v2.500h-3zM19 19.200h3v2.500h-3zM8.500 18h4v2.500h-4z" fill="#7fc26f" />
    <path d="M6 5.500h3l2 3 2.500-3h2.500l-3.500 4.500 3 5h-3.200l-2-3.200L7.700 15H5l4-5z" fill="#236b2b" />
  </OfficeFile>
)

const WordIcon = (
  <OfficeFile dark="#24468f" mid="#6f96d8" light="#c4d8f6">
    <path d="M11.500 6.500h11v16l-15-1.500v-4h4z" fill="#fff" stroke="#5c83c9" strokeWidth=".6" />
    <path d="M14 9.500h7M14 12.500h7M10 15.500h11M9 18.500l12 .8" stroke="#2f59b0" strokeWidth="1.600" />
    <path d="M4.500 5h2.300l.8 6.500L10 5h2l.5 6.500L14.700 5H17l-3.700 10h-2.200l-.6-5.500L8.400 15H6z" fill="#234c9f" />
  </OfficeFile>
)

const PaintIcon = (
  <svg width="24" height="24" viewBox="0 0 24 24">
    <path d="M11 4C4 5 .5 10 1.500 14.500c.8 2 2.500.5 4 1.500s0 3 2 4.500c6 2.500 14-1 14-8.500 0-5-5-9-10.500-8z" fill="#b9def5" stroke="#e4f3fc" strokeWidth=".8" />
    <circle cx="5" cy="12.500" r="2" fill="#e4483c" />
    <circle cx="8.500" cy="8.500" r="2" fill="#5cb947" />
    <circle cx="13.500" cy="7" r="2.200" fill="#f7b731" />
    <circle cx="10.500" cy="13.500" r="1.800" fill="#1c3148" />
    <path d="M17.500 5.500l2.500 1-6.500 17-1.500.5.500-3z" fill="#f28c28" />
    <path d="M18 1.500l4-1.500 1.500 3-3.500 4-2.500-1.500z" fill="#d9b27c" />
  </svg>
)

const APPS = [
  ['Start', WindowsIcon],
  ['File Explorer', ExplorerIcon],
  ['Calculator', CalculatorIcon],
  ['Address book', NotebookIcon],
  ['Edge', EdgeIcon],
  ['Firefox', FirefoxIcon],
  ['BlueStacks', BlueStacksIcon, 'open'],
  ['Flight', SkyIcon],
  ['Excel', ExcelIcon, 'active'],
  ['Word', WordIcon, 'open'],
  ['Paint', PaintIcon, 'open'],
]

// Dim wallpaper showing through the middle of the taskbar
function Wallpaper() {
  return (
    <svg width="433" height="40" viewBox="0 0 433 40" className="absolute left-[466px] top-0" aria-hidden="true">
      <path d="M0 0h433v40H0z" fill="#1c190f" />
      <path d="M0 0h40v40H0zM50 14l30-4 20 30H30z" fill="#17150e" />
      <path d="M110 0h20l14 40h-34z" fill="#1a110d" />
      <path d="M124 0h175l-14 40H138z" fill="#0e131e" />
      <path d="M222 0h75l-14 40h-59z" fill="#07090f" />
      <path d="M300 0h84v40h-96z" fill="#1f1d13" />
      <path d="M384 0h49v40h-53z" fill="#130d0a" />
      <path d="M45 3v8M52 1v12M60 5v10M47 28v10M68 30v8M341 14v6M351 6v5M388 10v25M398 4v30M412 8v28M424 3v30" stroke="#0b0806" strokeWidth="2" />
      <path d="M147 8h5M150 20h4M162 14h5M158 28h4M176 9h4M182 22h5M195 10h6M203 18h5M197 28h6M210 33h5M170 33h4" stroke="#090c13" strokeWidth="5" strokeLinecap="round" />
    </svg>
  )
}

function Taskbar() {
  return (
    <div className="relative flex h-10 shrink-0 justify-between overflow-hidden bg-black">
      <Wallpaper />
      <div className="relative flex gap-px">
        {APPS.map(([name, icon, state]) => (
          <button
            key={name}
            aria-label={name}
            className={`flex w-12 flex-col items-center ${state === 'active' ? 'bg-[#333]' : ''}`}
          >
            <span className="flex flex-1 items-center">{icon}</span>
            {state && <span className={`-mt-0.5 h-0.5 bg-[#f79a9f] ${state === 'active' ? 'w-full' : 'w-10'}`} />}
          </button>
        ))}
      </div>
      <div className="relative flex items-center text-white">
        <button aria-label="Show hidden icons" className="mr-2">
          <svg width="12" height="8" viewBox="0 0 12 8"><path d="M.5 7L6 1.500 11.500 7" fill="none" stroke="#fff" strokeWidth="1.300" /></svg>
        </button>
        <button aria-label="Volume" className="mr-2">
          <svg width="17" height="16" viewBox="0 0 17 16" fill="none" stroke="#fff">
            <path d="M.5 5.500h3l4-4v13l-4-4h-3z" />
            <path d="M9.500 5.500q1.500 2.500 0 5" />
            <path d="M12 3.500q2.500 4.500 0 9M14 1.500q3.500 6.500 0 13" stroke="#8a8a8a" />
          </svg>
        </button>
        <button aria-label="Battery" className="mr-2.5">
          <svg width="17" height="14" viewBox="0 0 17 14" fill="none" stroke="#fff">
            <path d="M5.500 4.500h10v7h-10z" />
            <path d="M7 6h7v4H7z" fill="#fff" />
            <path d="M16.500 6.500v3M1.500 0v3M4.500 0v3M.5 3h5v2.500l-1.500 1.500h-2L.5 5.500zM3 7v6" />
          </svg>
        </button>
        <button aria-label="Network" className="mr-2">
          <svg width="13" height="14" viewBox="0 0 13 14" fill="none" stroke="#fff">
            <path d="M10 13.500V10l2.500-.5v4z" fill="#fff" />
            <path d="M7 13.500q0-6 6-6.500M4 13.500q0-9 9-9.500" strokeWidth="1.300" />
            <path d="M1 13.500Q1 2 12.500 1" stroke="#999" strokeWidth="1.200" />
          </svg>
        </button>
        <button aria-label="Action Center" className="mr-3">
          <svg width="17" height="16" viewBox="0 0 17 16" fill="none" stroke="#fff">
            <path d="M.5.500h15.500v11.500h-5.500l-2.300 3-2.300-3H.5z" strokeWidth="1.200" />
            <path d="M3.500 3.500h9.500M3.500 6h9.500M3.500 8.500h6" />
          </svg>
        </button>
        <div className="w-[54px] pb-0.5 text-center text-[11px] leading-[17px]">
          <div>7:47 PM</div>
          <div>7/31/2016</div>
        </div>
        <span className="ml-2 mr-1 h-full w-px bg-[#4a4a4a]" />
      </div>
    </div>
  )
}

export default function App() {
  return (
    <div className="relative flex h-screen flex-col overflow-hidden bg-[#bfdbff] font-['Open_Sans','Noto_Sans',sans-serif]">
      <OfficeOrb />
      <TitleBar />
      <TabStrip />
      <div className="-mt-px">
        <Ribbon />
      </div>
      <div className="h-px bg-[#8fb0dc]" />
      <FormulaBar />
      <div className="h-[5px] border-b border-[#6088b5] bg-[#e3edf9]" />
      <div className="flex min-h-0 flex-1 pr-1">
        <Sheet />
        <VerticalScroll />
      </div>
      <SheetBar />
      <StatusBar />
      <Taskbar />
    </div>
  )
}
